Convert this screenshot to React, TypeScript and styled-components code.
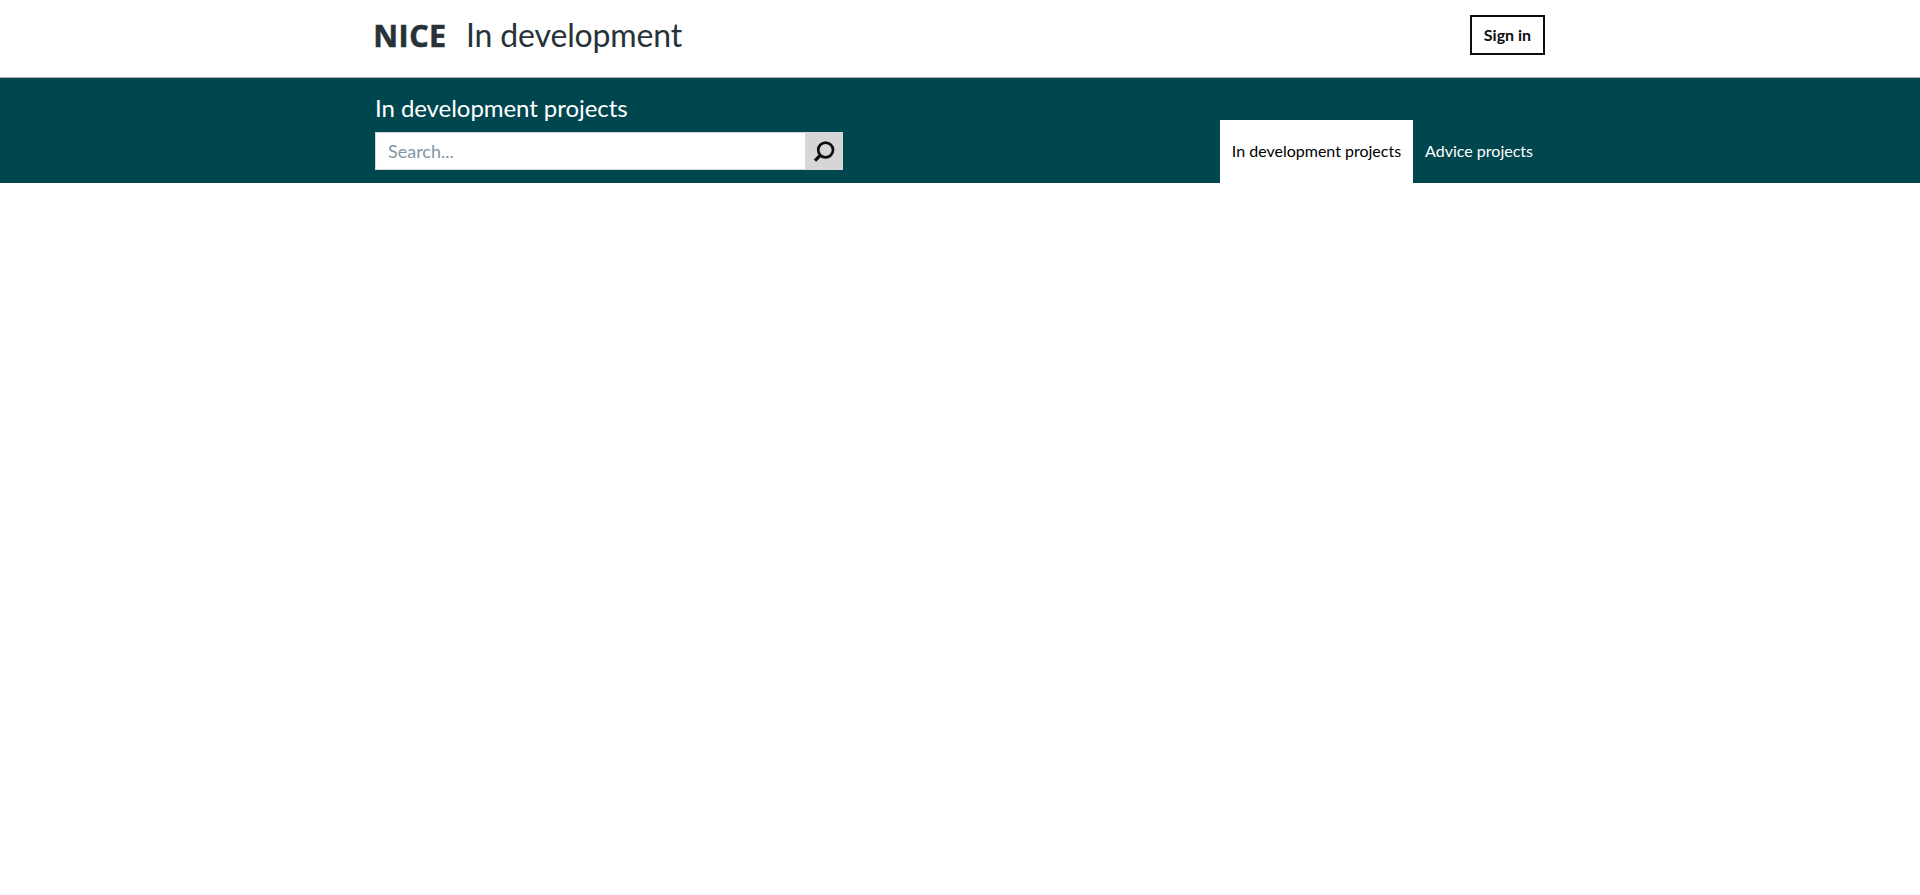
import React from "react";
import styled, { createGlobalStyle } from "styled-components";

const GlobalStyle = createGlobalStyle`
  *, *::before, *::after { box-sizing: border-box; }
  body {
    margin: 0;
    background: #fff;
    color: #0e0e0e;
    font-family: Lato, "Liberation Sans", sans-serif;
    font-size: 16px;
    line-height: 24px;
  }
`;

const Container = styled.div`
  width: 1170px;
  margin: 0 auto;
  display: flex;
  justify-content: space-between;
`;

const Header = styled.header`
  height: 78px;
  border-bottom: 1px solid #adadad;
  padding-top: 15px;
`;

const Brand = styled.a`
  display: flex;
  align-items: center;
  height: 40px;
  color: #263238;
  text-decoration: none;
`;

const Logo = styled.svg`
  display: block;
  width: 72px;
  height: 40px;
  margin-right: 19px;
  overflow: visible;
  fill: currentColor;
  font-family: "Open Sans", "Noto Sans", sans-serif;
  font-size: 30.5px;
  font-weight: 700;
  stroke: currentColor;
  stroke-width: 0.6px;
`;

const ServiceName = styled.span`
  font-size: 32px;
  line-height: 40px;
  letter-spacing: -0.15px;
`;

const SignIn = styled.button`
  width: 75px;
  height: 40px;
  padding: 0;
  border: 2px solid #0e0e0e;
  background: #fff;
  color: #0e0e0e;
  font: 700 16px/24px Lato, sans-serif;
`;

const Banner = styled.section`
  background: #00464f;
  height: 105px;

  ${Container} {
    height: 100%;
    align-items: flex-end;
  }
`;

const SearchForm = styled.form`
  width: 468px;
  padding-bottom: 13px;
`;

const SearchLabel = styled.label`
  display: block;
  margin-bottom: 8px;
  color: #fff;
  font-size: 24px;
  line-height: 32px;
  letter-spacing: -0.06px;
`;

const SearchRow = styled.div`
  display: flex;
  height: 38px;
`;

const SearchInput = styled.input`
  flex: 1;
  min-width: 0;
  border: 1px solid #d6d6d6;
  border-right: 0;
  border-radius: 0;
  padding: 0 12px;
  background: #fff;
  font: 400 18px/24px Lato, sans-serif;
  outline: 0;

  &::placeholder {
    color: #8397a3;
    opacity: 1;
  }
`;

const SearchButton = styled.button`
  width: 38px;
  padding: 0;
  border: 0;
  background: #d6d6d6;
  color: #0e0e0e;

  svg { display: block; }
`;

const Tabs = styled.nav`
  display: flex;
`;

const Tab = styled.a<{ $active?: boolean }>`
  height: 63px;
  padding: 19px 12px 0;
  background: ${(p) => (p.$active ? "#fff" : "transparent")};
  color: ${(p) => (p.$active ? "#000" : "#fff")};
  text-decoration: none;
`;

export default function App() {
  return (
    <>
      <GlobalStyle />
      <Header>
        <Container>
          <Brand href="#">
            <Logo aria-label="NICE">
              <text x="-1.8" y="31.7" textLength="73">NICE</text>
            </Logo>
            <ServiceName>In development</ServiceName>
          </Brand>
          <SignIn type="button">Sign in</SignIn>
        </Container>
      </Header>
      <Banner>
        <Container>
          <SearchForm onSubmit={(e) => e.preventDefault()}>
            <SearchLabel htmlFor="search">In development projects</SearchLabel>
            <SearchRow>
              <SearchInput id="search" type="text" placeholder="Search..." />
              <SearchButton type="submit" aria-label="Search">
                <svg width="38" height="38" viewBox="0 0 38 38" fill="none" stroke="currentColor">
                  <circle cx="20.6" cy="18" r="7.4" strokeWidth="2.7" />
                  <path d="M15.6 23L10 28.6" strokeWidth="3.2" />
                </svg>
              </SearchButton>
            </SearchRow>
          </SearchForm>
          <Tabs>
            <Tab href="#" $active>In development projects</Tab>
            <Tab href="#">Advice projects</Tab>
          </Tabs>
        </Container>
      </Banner>
    </>
  );
}
